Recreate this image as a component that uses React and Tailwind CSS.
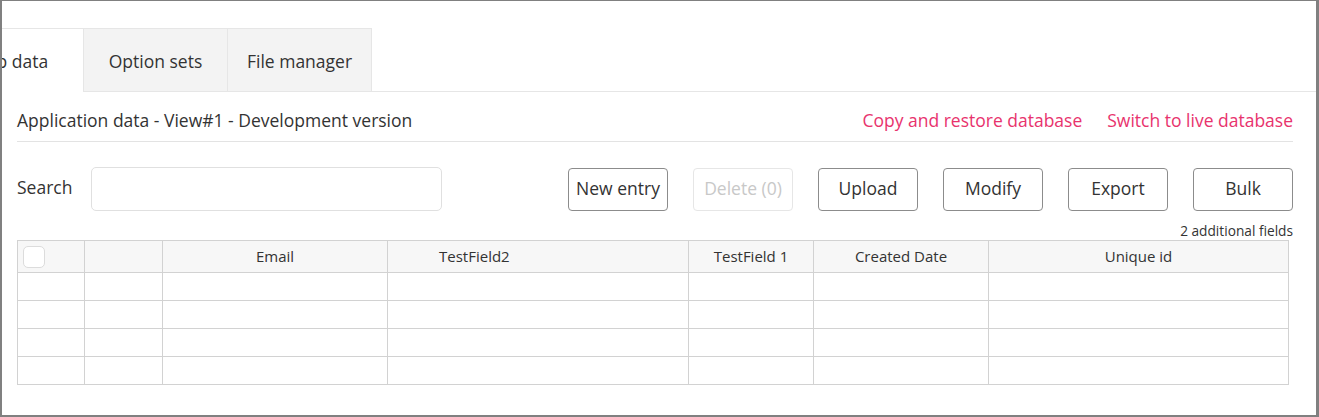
import React from "react";

const cols = [
  { w: 67, label: "" },
  { w: 78, label: "" },
  { w: 225, label: "Email" },
  { w: 301, label: "TestField2", left: true },
  { w: 125, label: "TestField 1" },
  { w: 175, label: "Created Date" },
  { w: 300, label: "Unique id" },
];

function Btn({ children, disabled }) {
  return (
    <button
      className={
        disabled
          ? "w-[100px] h-[43px] pb-[2px] rounded-[4px] border border-[#e6e6e6] text-[#c8c8c8] text-[17.5px] bg-white"
          : "w-[100px] h-[43px] pb-[2px] rounded-[4px] border border-[#8c8c8c] text-[#333] text-[17.5px] bg-white"
      }
    >
      {children}
    </button>
  );
}

export default function App() {
  return (
    <div
      className="w-[1319px] h-[417px] overflow-hidden bg-white border-t border-l-2 border-r-[3px] border-b-2 border-[#808080] text-[#333]"
      style={{ fontFamily: '"Open Sans", "Noto Sans", sans-serif' }}
    >
      <div className="pt-[27px]">
        <div className="flex h-[64px]">
          <div className="ml-[-62px] w-[144px] h-[64px] pt-[2px] bg-white border-t border-r border-[#e6e6e6] flex items-center justify-center text-[17.5px]">
            App data
          </div>
          <div className="w-[144px] h-[64px] pt-[2px] bg-[#f3f3f3] border-t border-b border-r border-[#e6e6e6] flex items-center justify-center text-[17.5px]">
            Option sets
          </div>
          <div className="w-[144px] h-[64px] pt-[2px] bg-[#f3f3f3] border-t border-b border-r border-[#e6e6e6] flex items-center justify-center text-[17.5px]">
            File manager
          </div>
          <div className="flex-1 border-b border-[#e6e6e6]"></div>
        </div>
        <div className="pl-[15px] pr-[23px]">
          <div className="flex items-center justify-between pt-[16px] pb-[9px] border-b border-[#e3e3e3] leading-[24px]">
            <div className="text-[17.5px]">Application data - View#1 - Development version</div>
            <div className="flex gap-[25px] text-[17.5px] text-[#e8336d]">
              <span>Copy and restore database</span>
              <span>Switch to live database</span>
            </div>
          </div>
          <div className="flex items-center mt-[25px]">
            <div className="text-[17.5px] w-[74px] pb-[3px]">Search</div>
            <div className="w-[351px] h-[44px] rounded-[5px] border border-[#e0e0e0]"></div>
            <div className="ml-auto flex gap-[25px]">
              <Btn>New entry</Btn>
              <Btn disabled>Delete (0)</Btn>
              <Btn>Upload</Btn>
              <Btn>Modify</Btn>
              <Btn>Export</Btn>
              <Btn>Bulk</Btn>
            </div>
          </div>
          <div className="h-[29px] flex items-center justify-end text-[13.7px] pt-[12px]">
            2 additional fields
          </div>
          <div className="w-[1272px] border-l border-t border-[#d2d2d2]">
            <div className="grid grid-cols-[67px_78px_225px_301px_125px_175px_300px] bg-[#f7f7f7] h-[32px]">
              {cols.map((c, i) => (
                <div
                  key={i}
                  className={
                    "border-r border-b border-[#d2d2d2] flex items-center text-[15px] " +
                    (c.left ? "pl-[51px]" : "justify-center")
                  }
                >
                  {i === 0 ? (
                    <div className="w-[22px] h-[22px] rounded-[5px] border border-[#dcdcdc] bg-white mr-auto ml-[5px]"></div>
                  ) : (
                    c.label
                  )}
                </div>
              ))}
            </div>
            {[0, 1, 2, 3].map((r) => (
              <div key={r} className="grid grid-cols-[67px_78px_225px_301px_125px_175px_300px] h-[28px] bg-white">
                {cols.map((c, i) => (
                  <div key={i} className="border-r border-b border-[#d2d2d2]"></div>
                ))}
              </div>
            ))}
          </div>
        </div>
      </div>
    </div>
  );
}
